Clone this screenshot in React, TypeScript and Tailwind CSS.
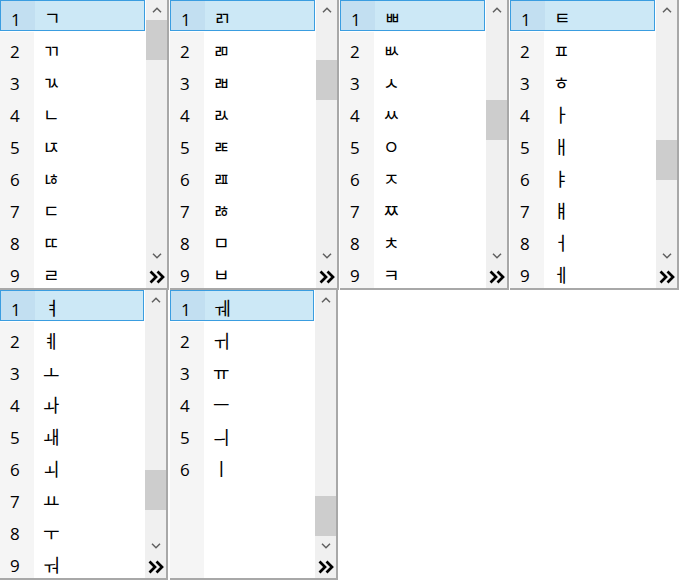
import React from 'react';

type Panel = {
  items: string[];
  thumb: number;
  width: string;
};

const topRow: Panel[] = [
  { items: ['ㄱ', 'ㄲ', 'ㄳ', 'ㄴ', 'ㄵ', 'ㄶ', 'ㄷ', 'ㄸ', 'ㄹ'], thumb: 0, width: 'w-[167px]' },
  { items: ['ㄺ', 'ㄻ', 'ㄼ', 'ㄽ', 'ㄾ', 'ㄿ', 'ㅀ', 'ㅁ', 'ㅂ'], thumb: 40, width: 'w-[167px]' },
  { items: ['ㅃ', 'ㅄ', 'ㅅ', 'ㅆ', 'ㅇ', 'ㅈ', 'ㅉ', 'ㅊ', 'ㅋ'], thumb: 80, width: 'w-[167px]' },
  { items: ['ㅌ', 'ㅍ', 'ㅎ', 'ㅏ', 'ㅐ', 'ㅑ', 'ㅒ', 'ㅓ', 'ㅔ'], thumb: 120, width: 'w-[167px]' },
];

const bottomRow: Panel[] = [
  { items: ['ㅕ', 'ㅖ', 'ㅗ', 'ㅘ', 'ㅙ', 'ㅚ', 'ㅛ', 'ㅜ', 'ㅝ'], thumb: 160, width: 'w-[166px]' },
  { items: ['ㅞ', 'ㅟ', 'ㅠ', 'ㅡ', 'ㅢ', 'ㅣ'], thumb: 186, width: 'w-[166px]' },
];

const ChevronUp = () => (
  <svg width="10" height="6" viewBox="0 0 10 6" fill="none">
    <path d="M1 5.2 L5 1.2 L9 5.2" stroke="#606060" strokeWidth="1.5" />
  </svg>
);

const ChevronDown = () => (
  <svg width="10" height="6" viewBox="0 0 10 6" fill="none">
    <path d="M1 0.8 L5 4.8 L9 0.8" stroke="#606060" strokeWidth="1.5" />
  </svg>
);

const NextPage = () => (
  <svg width="16" height="14" viewBox="0 0 16 14" fill="none">
    <path d="M1.5 1.5 L7 7 L1.5 12.5" stroke="#000" strokeWidth="2.7" />
    <path d="M8.5 1.5 L14 7 L8.5 12.5" stroke="#000" strokeWidth="2.7" />
  </svg>
);

const CandidateWindow = ({ panel }: { panel: Panel }) => {
  const rows = Array.from({ length: 9 }, (_, i) => panel.items[i]);

  return (
    <div className={`flex h-[288px] ${panel.width} box-content border-r-2 border-b-2 border-[#a8a8a8] bg-white`}>
      <div className="flex flex-1 flex-col">
        {rows.map((ch, i) => {
          const active = i === 0;
          return (
            <div
              key={i}
              className={
                active
                  ? 'flex h-[31px] mb-[1px] mr-[1px] border border-[#3a9de0] bg-[#cce8f6]'
                  : 'flex h-[32px]'
              }
            >
              <div
                className={`flex w-[34px] items-center pl-[10px] pt-[7px] text-[17px] leading-none text-black font-['Segoe_UI','Open_Sans',sans-serif] ${
                  active ? 'bg-[#c2dff1]' : 'bg-[#f5f5f5]'
                }`}
              >
                {ch !== undefined ? i + 1 : ''}
              </div>
              <div className="flex flex-1 items-center pl-[9px] pt-[3px] text-[18px] leading-none text-black font-['Noto_Sans_CJK_KR',sans-serif]">
                {ch ?? ''}
              </div>
            </div>
          );
        })}
      </div>
      <div className="flex w-[21px] flex-col bg-[#f0f0f0]">
        <div className="flex h-[20px] items-center justify-center">
          <ChevronUp />
        </div>
        <div className="h-[226px]">
          <div className="h-[40px] bg-[#cdcdcd]" style={{ marginTop: panel.thumb }} />
        </div>
        <div className="flex h-[20px] items-center justify-center">
          <ChevronDown />
        </div>
        <div className="flex h-[22px] items-center justify-center">
          <NextPage />
        </div>
      </div>
    </div>
  );
};

export default function App() {
  return (
    <div className="h-[580px] w-[680px] overflow-hidden bg-white">
      <div className="flex gap-[1px]">
        {topRow.map((p, i) => (
          <CandidateWindow key={i} panel={p} />
        ))}
      </div>
      <div className="flex gap-[2px]">
        {bottomRow.map((p, i) => (
          <CandidateWindow key={i} panel={p} />
        ))}
      </div>
    </div>
  );
}
